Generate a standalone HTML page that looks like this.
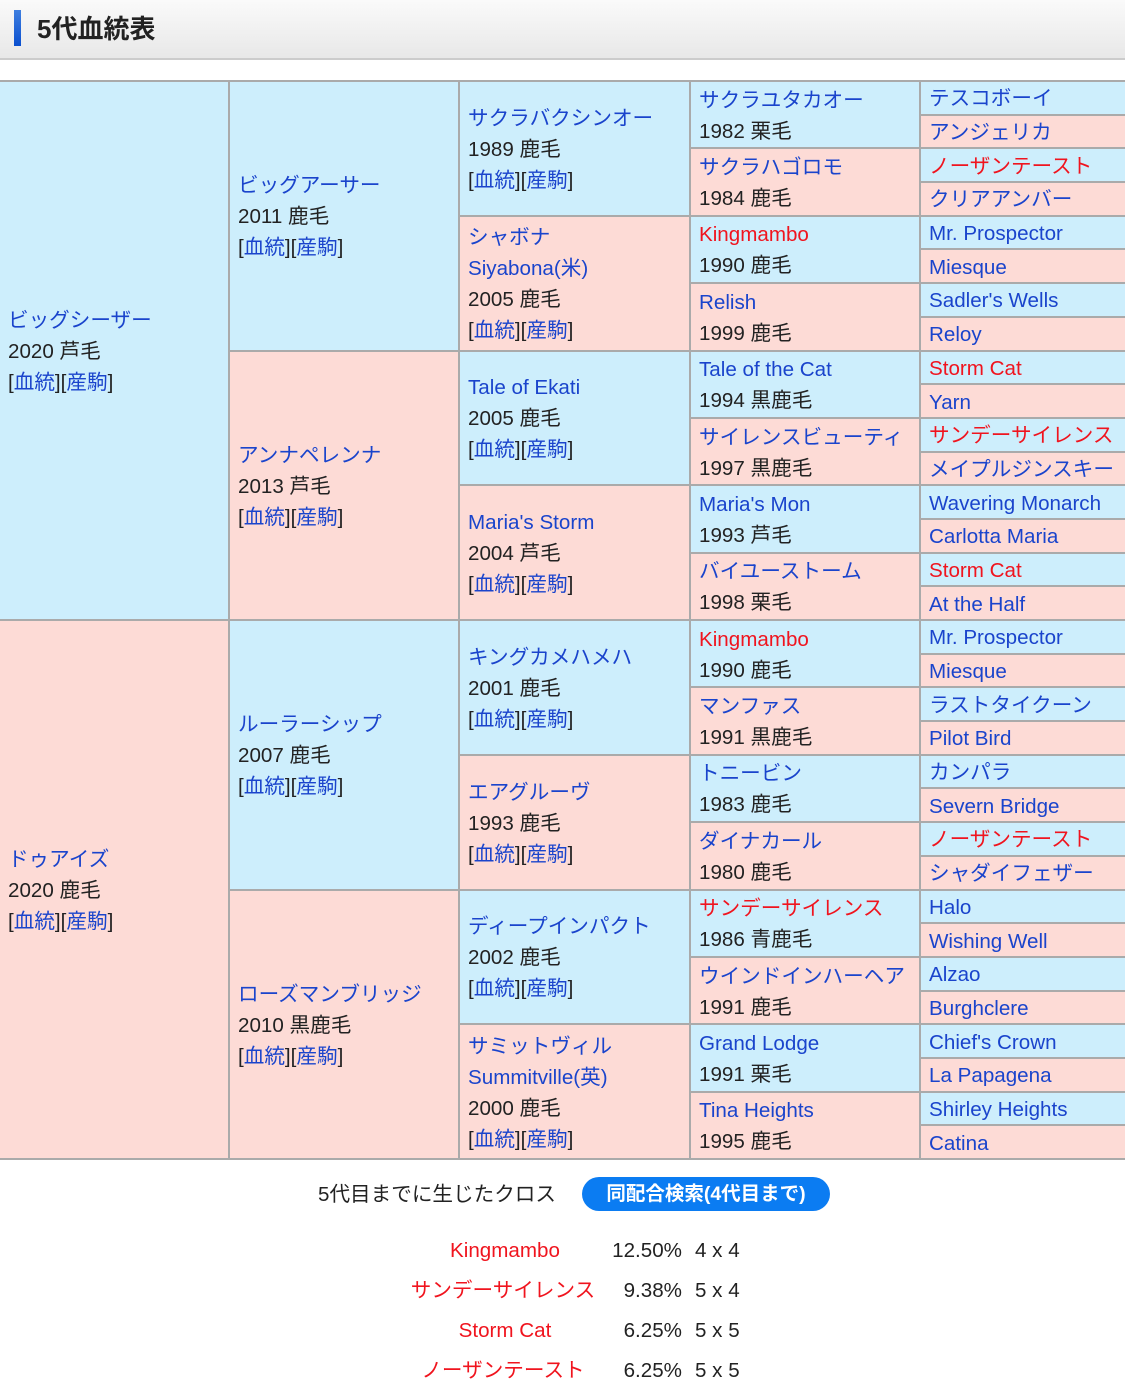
<!DOCTYPE html>
<html><head><meta charset="utf-8"><style>
body{margin:0;width:1125px;height:1392px;background:#fff;font-family:"Liberation Sans","Noto Sans CJK JP",sans-serif;color:#222;position:relative;overflow:hidden}
.hd{position:absolute;left:0;top:0;width:1125px;height:58px;background:linear-gradient(#fafafa,#e8e8e8);border-bottom:2px solid #ccc}
.hd i{position:absolute;left:14px;top:10px;width:7px;height:36px;background:linear-gradient(#3f7fe0,#0a4fcf)}
.hd b{position:absolute;left:37px;top:13px;font-size:26px;line-height:32px;color:#222}
.ped{position:absolute;left:0;top:80px;width:1125px;display:grid;grid-template-columns:228px 228px 229px 228px 1fr;grid-template-rows:repeat(32,31.7px);gap:2px;background:#aaa;border-top:2px solid #aaa;border-bottom:2px solid #aaa}
.ped div{display:flex;flex-direction:column;justify-content:center;padding-left:8px;padding-top:2px;font-size:20.6px;line-height:31px;white-space:nowrap;overflow:hidden}
.b{background:#cdeefc}.p{background:#fddbd6}
a,.l{color:#1a44cc;text-decoration:none}.r{color:#f0141e}
.c1{grid-column:1}.c2{grid-column:2}.c3{grid-column:3}.c4{grid-column:4}.c5{grid-column:5}
.bt{position:absolute;font-size:20.6px;line-height:28px}
.btn{position:absolute;left:582px;top:1177px;width:248px;height:34px;border-radius:17px;background:#0b7cf2;color:#fff;font-weight:bold;font-size:19.5px;line-height:35px;text-align:center}
</style></head><body>
<div class="hd"><i></i><b>5代血統表</b></div>
<div class="ped">
<div class="b c1" style="grid-row:1/span 16"><span class="l">ビッグシーザー</span><span>2020 芦毛</span><span>[<a>血統</a>][<a>産駒</a>]</span></div>
<div class="p c1" style="grid-row:17/span 16"><span class="l">ドゥアイズ</span><span>2020 鹿毛</span><span>[<a>血統</a>][<a>産駒</a>]</span></div>
<div class="b c2" style="grid-row:1/span 8"><span class="l">ビッグアーサー</span><span>2011 鹿毛</span><span>[<a>血統</a>][<a>産駒</a>]</span></div>
<div class="p c2" style="grid-row:9/span 8"><span class="l">アンナペレンナ</span><span>2013 芦毛</span><span>[<a>血統</a>][<a>産駒</a>]</span></div>
<div class="b c2" style="grid-row:17/span 8"><span class="l">ルーラーシップ</span><span>2007 鹿毛</span><span>[<a>血統</a>][<a>産駒</a>]</span></div>
<div class="p c2" style="grid-row:25/span 8"><span class="l">ローズマンブリッジ</span><span>2010 黒鹿毛</span><span>[<a>血統</a>][<a>産駒</a>]</span></div>
<div class="b c3" style="grid-row:1/span 4"><span class="l">サクラバクシンオー</span><span>1989 鹿毛</span><span>[<a>血統</a>][<a>産駒</a>]</span></div>
<div class="p c3" style="grid-row:5/span 4"><span class="l">シャボナ</span><span class="l">Siyabona(米)</span><span>2005 鹿毛</span><span>[<a>血統</a>][<a>産駒</a>]</span></div>
<div class="b c3" style="grid-row:9/span 4"><span class="l">Tale of Ekati</span><span>2005 鹿毛</span><span>[<a>血統</a>][<a>産駒</a>]</span></div>
<div class="p c3" style="grid-row:13/span 4"><span class="l">Maria's Storm</span><span>2004 芦毛</span><span>[<a>血統</a>][<a>産駒</a>]</span></div>
<div class="b c3" style="grid-row:17/span 4"><span class="l">キングカメハメハ</span><span>2001 鹿毛</span><span>[<a>血統</a>][<a>産駒</a>]</span></div>
<div class="p c3" style="grid-row:21/span 4"><span class="l">エアグルーヴ</span><span>1993 鹿毛</span><span>[<a>血統</a>][<a>産駒</a>]</span></div>
<div class="b c3" style="grid-row:25/span 4"><span class="l">ディープインパクト</span><span>2002 鹿毛</span><span>[<a>血統</a>][<a>産駒</a>]</span></div>
<div class="p c3" style="grid-row:29/span 4"><span class="l">サミットヴィル</span><span class="l">Summitville(英)</span><span>2000 鹿毛</span><span>[<a>血統</a>][<a>産駒</a>]</span></div>
<div class="b c4" style="grid-row:1/span 2"><span class="l">サクラユタカオー</span><span>1982 栗毛</span></div>
<div class="p c4" style="grid-row:3/span 2"><span class="l">サクラハゴロモ</span><span>1984 鹿毛</span></div>
<div class="b c4" style="grid-row:5/span 2"><span class="r">Kingmambo</span><span>1990 鹿毛</span></div>
<div class="p c4" style="grid-row:7/span 2"><span class="l">Relish</span><span>1999 鹿毛</span></div>
<div class="b c4" style="grid-row:9/span 2"><span class="l">Tale of the Cat</span><span>1994 黒鹿毛</span></div>
<div class="p c4" style="grid-row:11/span 2"><span class="l">サイレンスビューティ</span><span>1997 黒鹿毛</span></div>
<div class="b c4" style="grid-row:13/span 2"><span class="l">Maria's Mon</span><span>1993 芦毛</span></div>
<div class="p c4" style="grid-row:15/span 2"><span class="l">バイユーストーム</span><span>1998 栗毛</span></div>
<div class="b c4" style="grid-row:17/span 2"><span class="r">Kingmambo</span><span>1990 鹿毛</span></div>
<div class="p c4" style="grid-row:19/span 2"><span class="l">マンファス</span><span>1991 黒鹿毛</span></div>
<div class="b c4" style="grid-row:21/span 2"><span class="l">トニービン</span><span>1983 鹿毛</span></div>
<div class="p c4" style="grid-row:23/span 2"><span class="l">ダイナカール</span><span>1980 鹿毛</span></div>
<div class="b c4" style="grid-row:25/span 2"><span class="r">サンデーサイレンス</span><span>1986 青鹿毛</span></div>
<div class="p c4" style="grid-row:27/span 2"><span class="l">ウインドインハーヘア</span><span>1991 鹿毛</span></div>
<div class="b c4" style="grid-row:29/span 2"><span class="l">Grand Lodge</span><span>1991 栗毛</span></div>
<div class="p c4" style="grid-row:31/span 2"><span class="l">Tina Heights</span><span>1995 鹿毛</span></div>
<div class="b c5" style="grid-row:1"><span class="l">テスコボーイ</span></div>
<div class="p c5" style="grid-row:2"><span class="l">アンジェリカ</span></div>
<div class="b c5" style="grid-row:3"><span class="r">ノーザンテースト</span></div>
<div class="p c5" style="grid-row:4"><span class="l">クリアアンバー</span></div>
<div class="b c5" style="grid-row:5"><span class="l">Mr. Prospector</span></div>
<div class="p c5" style="grid-row:6"><span class="l">Miesque</span></div>
<div class="b c5" style="grid-row:7"><span class="l">Sadler's Wells</span></div>
<div class="p c5" style="grid-row:8"><span class="l">Reloy</span></div>
<div class="b c5" style="grid-row:9"><span class="r">Storm Cat</span></div>
<div class="p c5" style="grid-row:10"><span class="l">Yarn</span></div>
<div class="b c5" style="grid-row:11"><span class="r">サンデーサイレンス</span></div>
<div class="p c5" style="grid-row:12"><span class="l">メイプルジンスキー</span></div>
<div class="b c5" style="grid-row:13"><span class="l">Wavering Monarch</span></div>
<div class="p c5" style="grid-row:14"><span class="l">Carlotta Maria</span></div>
<div class="b c5" style="grid-row:15"><span class="r">Storm Cat</span></div>
<div class="p c5" style="grid-row:16"><span class="l">At the Half</span></div>
<div class="b c5" style="grid-row:17"><span class="l">Mr. Prospector</span></div>
<div class="p c5" style="grid-row:18"><span class="l">Miesque</span></div>
<div class="b c5" style="grid-row:19"><span class="l">ラストタイクーン</span></div>
<div class="p c5" style="grid-row:20"><span class="l">Pilot Bird</span></div>
<div class="b c5" style="grid-row:21"><span class="l">カンパラ</span></div>
<div class="p c5" style="grid-row:22"><span class="l">Severn Bridge</span></div>
<div class="b c5" style="grid-row:23"><span class="r">ノーザンテースト</span></div>
<div class="p c5" style="grid-row:24"><span class="l">シャダイフェザー</span></div>
<div class="b c5" style="grid-row:25"><span class="l">Halo</span></div>
<div class="p c5" style="grid-row:26"><span class="l">Wishing Well</span></div>
<div class="b c5" style="grid-row:27"><span class="l">Alzao</span></div>
<div class="p c5" style="grid-row:28"><span class="l">Burghclere</span></div>
<div class="b c5" style="grid-row:29"><span class="l">Chief's Crown</span></div>
<div class="p c5" style="grid-row:30"><span class="l">La Papagena</span></div>
<div class="b c5" style="grid-row:31"><span class="l">Shirley Heights</span></div>
<div class="p c5" style="grid-row:32"><span class="l">Catina</span></div>
</div>
<div class="bt" style="left:318px;top:1181px">5代目までに生じたクロス</div>
<div class="btn">同配合検索(4代目まで)</div>
<div class="bt r" style="left:380px;width:250px;text-align:center;top:1237px">Kingmambo</div>
<div class="bt" style="left:596px;width:86px;text-align:right;top:1237px">12.50%</div>
<div class="bt" style="left:695px;top:1237px">4 x 4</div>
<div class="bt r" style="left:380px;width:246px;text-align:center;top:1277px">サンデーサイレンス</div>
<div class="bt" style="left:596px;width:86px;text-align:right;top:1277px">9.38%</div>
<div class="bt" style="left:695px;top:1277px">5 x 4</div>
<div class="bt r" style="left:380px;width:250px;text-align:center;top:1317px">Storm Cat</div>
<div class="bt" style="left:596px;width:86px;text-align:right;top:1317px">6.25%</div>
<div class="bt" style="left:695px;top:1317px">5 x 5</div>
<div class="bt r" style="left:380px;width:246px;text-align:center;top:1357px">ノーザンテースト</div>
<div class="bt" style="left:596px;width:86px;text-align:right;top:1357px">6.25%</div>
<div class="bt" style="left:695px;top:1357px">5 x 5</div>
</body></html>
